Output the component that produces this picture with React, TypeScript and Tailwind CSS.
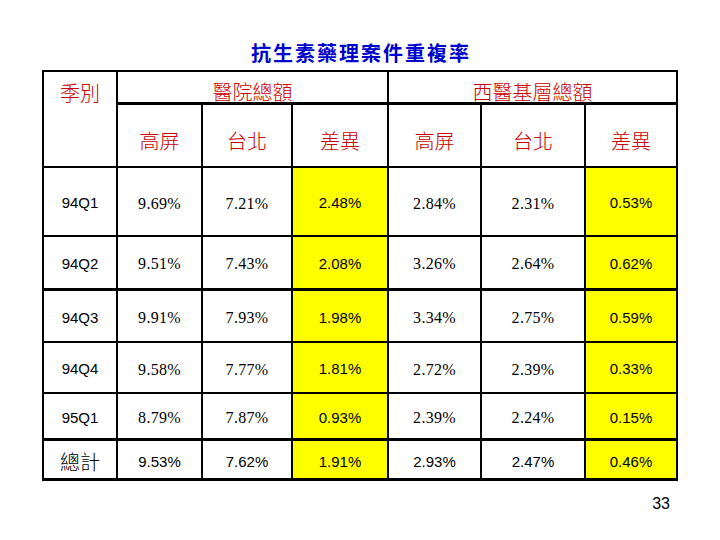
const cjk = "font-['Noto_Sans_CJK_TC','Noto_Sans_CJK_SC',sans-serif]";
const serifNum = "font-['Liberation_Serif',serif] text-[16px] tracking-[0.3px]";
const sansNum = "font-['Liberation_Sans',Arial,sans-serif] text-[15px]";

type Row = {
  q: string;
  a: [string, string, string];
  b: [string, string, string];
  h: string;
  thick?: boolean;
};

const rows: Row[] = [
  { q: "94Q1", a: ["9.69%", "7.21%", "2.48%"], b: ["2.84%", "2.31%", "0.53%"], h: "h-[69px]" },
  { q: "94Q2", a: ["9.51%", "7.43%", "2.08%"], b: ["3.26%", "2.64%", "0.62%"], h: "h-[53px]", thick: true },
  { q: "94Q3", a: ["9.91%", "7.93%", "1.98%"], b: ["3.34%", "2.75%", "0.59%"], h: "h-[53px]" },
  { q: "94Q4", a: ["9.58%", "7.77%", "1.81%"], b: ["2.72%", "2.39%", "0.33%"], h: "h-[51px]" },
  { q: "95Q1", a: ["8.79%", "7.87%", "0.93%"], b: ["2.39%", "2.24%", "0.15%"], h: "h-[46px]", thick: true },
];

const cell = "border-2 border-black text-center align-middle p-0";
const red = `${cjk} text-[20px] leading-none text-[#c80000] font-light`;

function DataRow({ r }: { r: Row }) {
  const bb = r.thick ? "border-b-[3px]" : "";
  return (
    <tr className={r.h}>
      <td className={`${cell} ${bb} ${sansNum} pt-[4px]`}>{r.q}</td>
      <td className={`${cell} ${bb} ${serifNum} pt-[4px]`}>{r.a[0]}</td>
      <td className={`${cell} ${bb} ${serifNum} pt-[4px]`}>{r.a[1]}</td>
      <td className={`${cell} ${bb} ${sansNum} pt-[4px] bg-[#ffff00]`}>{r.a[2]}</td>
      <td className={`${cell} ${bb} ${serifNum} pt-[4px]`}>{r.b[0]}</td>
      <td className={`${cell} ${bb} ${serifNum} pt-[4px]`}>{r.b[1]}</td>
      <td className={`${cell} ${bb} ${sansNum} pt-[4px] bg-[#ffff00]`}>{r.b[2]}</td>
    </tr>
  );
}

export default function App() {
  return (
    <div className="flex h-[540px] w-[720px] flex-col bg-white text-black">
      <h1
        className={`${cjk} pt-[41px] pl-[2px] text-center text-[20px] font-bold leading-[24px] tracking-[2px] text-[#0000cc]`}
      >
        抗生素藥理案件重複率
      </h1>

      <table className="ml-[42px] mt-[5px] w-[636px] table-fixed border-collapse">
        <colgroup>
          <col className="w-[74px]" />
          <col className="w-[85px]" />
          <col className="w-[90px]" />
          <col className="w-[96px]" />
          <col className="w-[93px]" />
          <col className="w-[104px]" />
          <col className="w-[92px]" />
        </colgroup>
        <tbody>
          <tr className="h-[32px]">
            <td rowSpan={2} className={`${cell} ${red} !align-top pt-[11px]`}>
              季別
            </td>
            <td colSpan={3} className={`${cell} border-b-[3px] ${red} !align-bottom pb-0`}>
              醫院總額
            </td>
            <td colSpan={3} className={`${cell} border-b-[3px] ${red} !align-bottom pb-0`}>
              西醫基層總額
            </td>
          </tr>
          <tr className="h-[64px]">
            <td className={`${cell} ${red} pt-[12px]`}>高屏</td>
            <td className={`${cell} ${red} pt-[12px]`}>台北</td>
            <td className={`${cell} ${red} pt-[12px]`}>差異</td>
            <td className={`${cell} ${red} pt-[12px]`}>高屏</td>
            <td className={`${cell} ${red} pt-[12px]`}>台北</td>
            <td className={`${cell} ${red} pt-[12px]`}>差異</td>
          </tr>
          {rows.map((r) => (
            <DataRow key={r.q} r={r} />
          ))}
          <tr className="h-[40px]">
            <td className={`${cell} border-b-[3px] ${cjk} text-[20px] leading-none font-light pt-[6px]`}>總計</td>
            <td className={`${cell} border-b-[3px] ${sansNum} pt-[6px]`}>9.53%</td>
            <td className={`${cell} border-b-[3px] ${sansNum} pt-[6px]`}>7.62%</td>
            <td className={`${cell} border-b-[3px] ${sansNum} pt-[6px] bg-[#ffff00]`}>1.91%</td>
            <td className={`${cell} border-b-[3px] ${sansNum} pt-[6px]`}>2.93%</td>
            <td className={`${cell} border-b-[3px] ${sansNum} pt-[6px]`}>2.47%</td>
            <td className={`${cell} border-b-[3px] ${sansNum} pt-[6px] bg-[#ffff00]`}>0.46%</td>
          </tr>
        </tbody>
      </table>

      <div className="mt-[14px] w-[670px] text-right font-['Liberation_Sans',Arial,sans-serif] text-[16px] leading-[18px]">
        33
      </div>
    </div>
  );
}
